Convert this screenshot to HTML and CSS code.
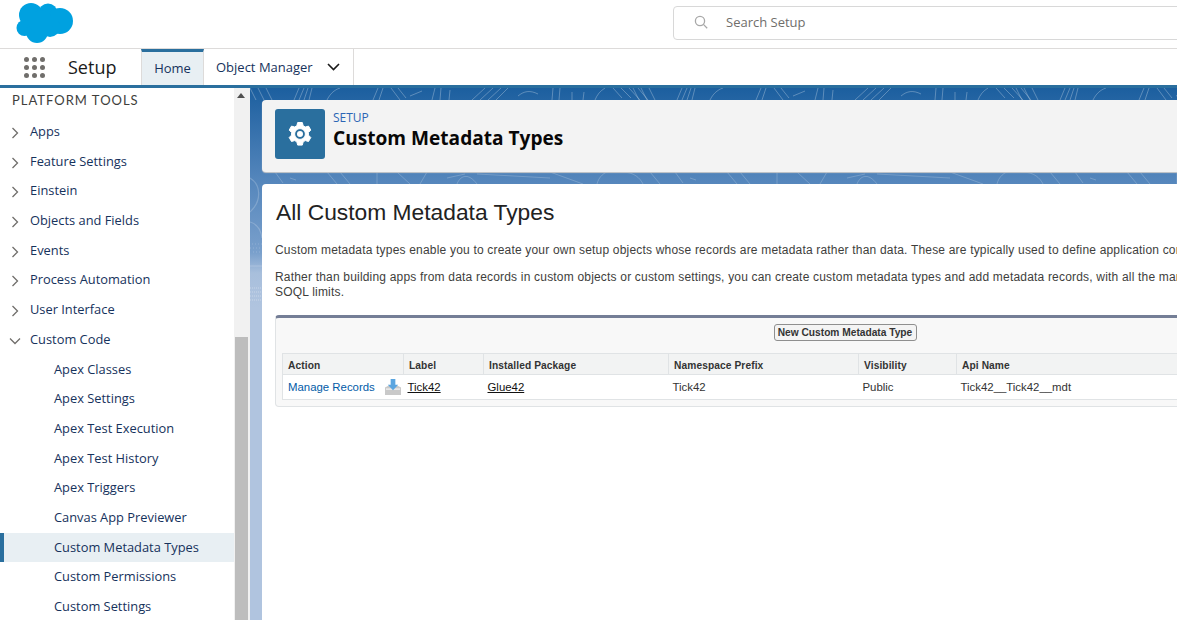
FILE: index.html
```html
<!DOCTYPE html>
<html lang="en">
<head>
  <meta charset="UTF-8">
  <meta name="viewport" content="width=device-width, initial-scale=1.0">
  <title>Custom Metadata Types</title>
  <link rel="stylesheet" href="styles.css">
</head>
<body>
  <!-- Global header -->
  <header class="global-header">
    <svg class="logo" width="60" height="44" viewBox="0 0 60 44">
      <g fill="#00a1e0">
        <circle cx="16" cy="15" r="12"/>
        <circle cx="33" cy="13" r="9.500"/>
        <circle cx="45" cy="21" r="13"/>
        <circle cx="9.500" cy="28" r="8"/>
        <circle cx="22" cy="32" r="11"/>
        <circle cx="35" cy="27" r="10"/>
        <circle cx="26" cy="22" r="12"/>
      </g>
    </svg>
    <div class="search">
      <svg width="14" height="14" viewBox="0 0 14 14" fill="none" stroke="#a8a8a8" stroke-width="1.3">
        <circle cx="6" cy="6" r="4.6"/>
        <path d="M9.4 9.4L13.2 13.2"/>
      </svg>
      <span>Search Setup</span>
    </div>
  </header>

  <!-- App nav -->
  <nav class="app-nav">
    <div class="launcher">
      <i></i><i></i><i></i><i></i><i></i><i></i><i></i><i></i><i></i>
    </div>
    <div class="app-name">Setup</div>
    <a class="tab tab-active">Home</a>
    <a class="tab tab-menu">Object Manager
      <svg width="13" height="8" viewBox="0 0 13 8" fill="none" stroke="#1a1a1a" stroke-width="1.6">
        <path d="M1 1l5.5 5.5L12 1"/>
      </svg>
    </a>
  </nav>

  <div class="main">
    <!-- Setup tree -->
    <aside class="sidebar">
      <div class="tree">
        <div class="tree-title">PLATFORM TOOLS</div>
        <div class="tree-item"><svg class="chev" viewBox="0 0 8 12"><path d="M1.5 1l5 5-5 5"/></svg>Apps</div>
        <div class="tree-item"><svg class="chev" viewBox="0 0 8 12"><path d="M1.5 1l5 5-5 5"/></svg>Feature Settings</div>
        <div class="tree-item"><svg class="chev" viewBox="0 0 8 12"><path d="M1.5 1l5 5-5 5"/></svg>Einstein</div>
        <div class="tree-item"><svg class="chev" viewBox="0 0 8 12"><path d="M1.5 1l5 5-5 5"/></svg>Objects and Fields</div>
        <div class="tree-item"><svg class="chev" viewBox="0 0 8 12"><path d="M1.5 1l5 5-5 5"/></svg>Events</div>
        <div class="tree-item"><svg class="chev" viewBox="0 0 8 12"><path d="M1.5 1l5 5-5 5"/></svg>Process Automation</div>
        <div class="tree-item"><svg class="chev" viewBox="0 0 8 12"><path d="M1.5 1l5 5-5 5"/></svg>User Interface</div>
        <div class="tree-item"><svg class="chev chev-open" viewBox="0 0 12 8"><path d="M1 1.5l5 5 5-5"/></svg>Custom Code</div>
        <div class="tree-item sub">Apex Classes</div>
        <div class="tree-item sub">Apex Settings</div>
        <div class="tree-item sub">Apex Test Execution</div>
        <div class="tree-item sub">Apex Test History</div>
        <div class="tree-item sub">Apex Triggers</div>
        <div class="tree-item sub">Canvas App Previewer</div>
        <div class="tree-item sub selected">Custom Metadata Types</div>
        <div class="tree-item sub">Custom Permissions</div>
        <div class="tree-item sub">Custom Settings</div>
      </div>
      <div class="scrollbar">
        <div class="scroll-up"></div>
        <div class="scroll-thumb"></div>
      </div>
    </aside>

    <!-- Page content -->
    <section class="content">
      <svg class="texture" width="927" height="240" viewBox="0 0 927 240" fill="none" stroke="#fff">
        <defs>
          <g id="band-top">
            <path d="M0 0L6 12M8 0L14 12M16 0L22 12M44 12L49 0M49 12L54 0M54 12L58 0M59 12L62 0M77 12C80 6 84 2 90 0"/>
            <path d="M123 12L128 0M129 12L133 0M141 0L150 12M148 0L156 10M160 8L172 3M182 12L185 0M190 12L191 0M199 12L200 2"/>
            <path d="M222 12L235 0M230 12L243 0M238 12L251 0M246 12L258 0M268 8C274 3 280 2 288 6M302 12L303 0M309 12L310 0M322 12L322 4M333 12L334 4M345 12C347 7 350 3 355 0"/>
            <path d="M363 0L372 10M371 0L381 10M379 0L390 12M388 0L398 12"/>
          </g>
          <g id="band-bottom">
            <path d="M25 84L33 95M40 90L46 92M77 84L87 96M90 84L100 96M127 84L127 96M147 84L160 96M177 84L170 96"/>
            <path d="M197 90L215 86M207 96C210 88 218 84 227 96M227 86L300 90M300 84L333 96M347 96C350 84 362 80 372 84C384 84 390 90 393 96M400 84L410 96"/>
          </g>
        </defs>
        <g stroke-opacity=".28">
          <use href="#band-top"/>
          <use href="#band-top" x="383"/>
          <use href="#band-top" x="766"/>
        </g>
        <g stroke-opacity=".2">
          <use href="#band-bottom"/>
          <use href="#band-bottom" x="400"/>
          <use href="#band-bottom" x="800"/>
          <path d="M0 90C10 96 13 112 0 124M0 134C7 136 11 142 12 150M0 178H12" stroke-width="1.200"/>
          <path d="M2 156H12M0 160H11M3 164H12" stroke-dasharray="1 2"/>
          <path d="M0 200H12M0 204H12M0 208H12M0 212H12" stroke-dasharray="1 1" stroke-opacity=".35"/>
        </g>
      </svg>

      <div class="page-title">
        <div class="title-icon">
          <svg width="28" height="28" viewBox="0 0 28 28">
            <path fill="#fff" stroke="#fff" stroke-linejoin="round" fill-rule="evenodd" d="M11.7 2.500h4.600l.9 3.300 2.100 1.200 3.200-.9 2.300 4-2.400 2.400v2.600l2.400 2.400-2.300 4-3.200-.9-2.100 1.200-.9 3.300h-4.600l-.9-3.300-2.100-1.200-3.200.9-2.300-4 2.400-2.400v-2.600L3.200 10.100l2.300-4 3.200.9 2.100-1.200zM14 8.600a5.400 5.400 0 1 0 0 10.800 5.400 5.400 0 0 0 0-10.800z"/>
            <circle cx="14" cy="14" r="3" fill="#fff"/>
          </svg>
        </div>
        <div>
          <div class="eyebrow">SETUP</div>
          <h1>Custom Metadata Types</h1>
        </div>
      </div>

      <div class="card">
        <h2>All Custom Metadata Types</h2>
        <p>Custom metadata types enable you to create your own setup objects whose records are metadata rather than data. These are typically used to define application con</p>
        <p>Rather than building apps from data records in custom objects or custom settings, you can create custom metadata types and add metadata records, with all the mar<br>SOQL limits.</p>

        <div class="block">
          <div class="block-buttons"><button class="btn">New Custom Metadata Type</button></div>
          <table class="list">
            <thead>
              <tr>
                <th class="col-action">Action</th>
                <th class="col-label">Label</th>
                <th class="col-package">Installed Package</th>
                <th class="col-prefix">Namespace Prefix</th>
                <th class="col-vis">Visibility</th>
                <th>Api Name</th>
              </tr>
            </thead>
            <tbody>
              <tr>
                <td>
                  <div class="action-cell">
                    <a class="manage">Manage Records</a>
                    <svg class="download" width="16" height="16" viewBox="0 0 17 17">
                      <path fill="#c9c9c9" d="M0 9l4-2h9l4 2v8H0z"/>
                      <path fill="#ececec" d="M1 10h15v1.500H1z"/>
                      <path fill="#5aa5e0" d="M6 0h5v6h3l-5.500 6L3 6h3z"/>
                    </svg>
                  </div>
                </td>
                <td><a class="link">Tick42</a></td>
                <td><a class="link">Glue42</a></td>
                <td>Tick42</td>
                <td>Public</td>
                <td>Tick42__Tick42__mdt</td>
              </tr>
            </tbody>
          </table>
        </div>
      </div>
    </section>
  </div>
</body>
</html>
```

FILE: styles.css
```css
html, body {
  margin: 0;
  height: 100%;
  overflow: hidden;
}

body {
  width: 1177px;
  height: 620px;
  display: flex;
  flex-direction: column;
  background: #fff;
  font-family: "Open Sans", sans-serif;
  color: #16325c;
}

/* Global header */
.global-header {
  flex: none;
  height: 48px;
  border-bottom: 1px solid #dddbda;
  display: flex;
  overflow: hidden;
}

.logo {
  margin-left: 15px;
  flex: none;
}

.search {
  margin-left: 598px;
  margin-top: 6px;
  width: 700px;
  height: 30px;
  padding-bottom: 2px;
  flex: none;
  border: 1px solid #d8d8d8;
  border-radius: 4px;
  display: flex;
  align-items: center;
  font-size: 13px;
  color: #706e6b;
}

.search svg {
  margin-left: 20px;
  margin-right: 18px;
}

/* App nav */
.app-nav {
  flex: none;
  height: 36px;
  display: flex;
  align-items: stretch;
}

.launcher {
  width: 21px;
  margin: 8px 0 0 24px;
  height: 21px;
  display: grid;
  grid-template-columns: repeat(3, 5px);
  grid-auto-rows: 5px;
  gap: 3px;
}

.launcher i {
  background: #706e6b;
  border-radius: 50%;
}

.app-name {
  width: 73px;
  margin-left: 23px;
  font-size: 18px;
  line-height: 36px;
  color: #1a1a1a;
}

.tab {
  font-size: 13px;
  line-height: 36px;
  color: #16325c;
  border-right: 1px solid #dddbda;
}

.tab-active {
  width: 61px;
  text-align: center;
  background: #e8eff3;
  border-top: 3px solid #2a6f9e;
  border-left: 1px solid #dddbda;
  line-height: 33px;
}

.tab-menu {
  width: 150px;
  padding-left: 12px;
  box-sizing: border-box;
  display: flex;
  align-items: center;
  gap: 14px;
}

/* Main area */
.main {
  flex: 1;
  min-height: 0;
  display: flex;
  border-top: 3px solid #2a6f9e;
}

.sidebar {
  flex: none;
  width: 250px;
  display: flex;
}

.tree {
  width: 234px;
  flex: none;
  overflow: hidden;
}

.tree-title {
  height: 29.05px;
  line-height: 24px;
  padding-left: 12px;
  font-family: "Lato", sans-serif;
  font-size: 13px;
  letter-spacing: 1px;
  color: #3e3e3c;
}

.tree-item {
  height: 29.7px;
  line-height: 29.7px;
  padding-left: 30px;
  position: relative;
  font-size: 12.85px;
  color: #16325c;
}

.chev {
  position: absolute;
  left: 11px;
  top: 10px;
  width: 8px;
  height: 12px;
  fill: none;
  stroke: #706e6b;
  stroke-width: 1.3;
}

.chev-open {
  width: 12px;
  height: 8px;
  left: 9px;
  top: 12px;
}

.sub {
  padding-left: 54px;
}

.selected {
  background: #e8eff3;
  box-shadow: inset 4px 0 0 #2a6f9e;
}

.scrollbar {
  width: 16px;
  background: #f1f1f1;
}

.scroll-up {
  width: 0;
  height: 0;
  margin: 5px 0 0 3px;
  border: 4px solid transparent;
  border-top: 0;
  border-bottom: 5px solid #505050;
}

.scroll-thumb {
  width: 13px;
  height: 285px;
  margin: 239px 0 0 1px;
  background: #bdbdbd;
}

/* Content */
.content {
  flex: 1;
  min-width: 0;
  padding: 12px 0 0 12px;
  position: relative;
  overflow: hidden;
  background: linear-gradient(#1c5f9f 0, #5385bb 90px, #7aa0cc 165px, #a8bfdc 185px, #b0c4df 220px);
}

.texture {
  position: absolute;
  left: 0;
  top: 0;
}

.page-title {
  position: relative;
  width: 1000px;
  height: 72px;
  box-sizing: border-box;
  padding: 9px 13px;
  display: flex;
  gap: 8px;
  background: #f3f3f3;
  border-radius: 4px;
  box-shadow: 0 1px 1px #c9c9c9;
}

.title-icon {
  width: 50px;
  height: 50px;
  border-radius: 3px;
  background: #2a6f9e;
  display: flex;
  align-items: center;
  justify-content: center;
}

.eyebrow {
  font-size: 12px;
  line-height: 18px;
  color: #2b65b5;
}

h1 {
  margin: -1px 0 0;
  font-size: 19.1px;
  line-height: 24px;
  font-weight: 700;
  color: #080707;
}

.card {
  position: relative;
  width: 1300px;
  height: 460px;
  margin-top: 12px;
  padding-left: 13px;
  box-sizing: border-box;
  background: #fff;
  border-radius: 4px 4px 0 0;
  font-family: "Liberation Sans", Arial, sans-serif;
  color: #3e3e3c;
}

h2 {
  margin: 0;
  padding: 15px 0 0 1px;
  font-size: 22.8px;
  line-height: 27px;
  font-weight: 400;
  color: #222;
}

p {
  margin: 0 0 12px;
  font-size: 12px;
  letter-spacing: .19px;
  line-height: 15px;
  white-space: nowrap;
}

h2 + p {
  margin-top: 17px;
}

.block {
  width: 1140px;
  height: 92px;
  margin-top: 15px;
  box-sizing: border-box;
  background: #f8f8f8;
  border: 1px solid #e0e3e5;
  border-top: 3px solid #747e96;
  border-radius: 4px;
}

.block-buttons {
  height: 35px;
  padding-top: 6px;
  box-sizing: border-box;
  display: flex;
  justify-content: center;
  align-items: flex-start;
}

.btn {
  width: 143px;
  height: 17px;
  padding: 0;
  font-family: "Liberation Sans", Arial, sans-serif;
  font-size: 10.2px;
  font-weight: 700;
  color: #333;
  background: #f4f4f4;
  border: 1px solid #8f8f8f;
  border-radius: 3px;
}

.list {
  width: 1125px;
  margin-left: 6px;
  border-collapse: collapse;
  table-layout: fixed;
  background: #fff;
  font-size: 11.4px;
  color: #333;
}

th {
  height: 21px;
  padding: 3px 5px 0;
  box-sizing: border-box;
  text-align: left;
  font-size: 10.2px;
  letter-spacing: .1px;
  background: #f2f3f3;
  border: 1px solid #e0e3e5;
  border-left: 0;
}

td {
  height: 24px;
  padding: 0 4px;
  border-bottom: 1px solid #e0e3e5;
}

.list th:first-child, .list td:first-child {
  border-left: 1px solid #e0e3e5;
}

.col-action { width: 121px; }
.col-label { width: 80px; }
.col-package { width: 185px; }
.col-prefix { width: 190px; }
.col-vis { width: 98px; }

.action-cell {
  display: flex;
  align-items: center;
  justify-content: space-between;
  padding: 0 0 0 1px;
}

.download {
  margin-right: -1px;
}

.manage {
  color: #015ba7;
}

.link {
  color: #111;
  text-decoration: underline;
}
```
